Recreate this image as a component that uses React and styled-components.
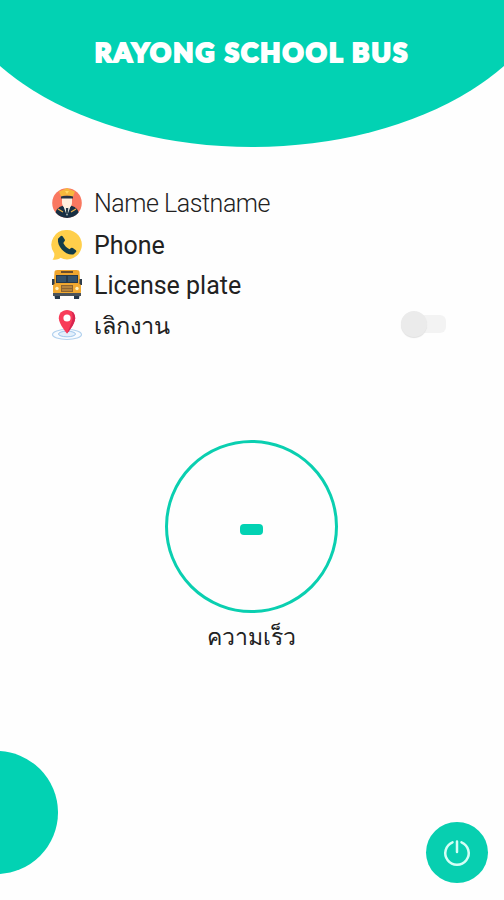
import React from "react";
import styled, { createGlobalStyle } from "styled-components";

const teal = "#02d2b3";

const Global = createGlobalStyle`
  * { box-sizing: border-box; }
  body { margin: 0; background: #fefefe; }
`;
const Screen = styled.main`
  position: relative;
  width: 504px;
  height: 900px;
  overflow: hidden;
  background: #fefefe;
  font-family: Roboto, "Noto Sans", sans-serif;
  color: #222;
`;
const Header = styled.header`
  width: 620px;
  height: 194px;
  margin: -47px 0 0 -58px;
  padding-top: 81px;
  background: ${teal};
  border-radius: 0 0 310px 310px / 0 0 194px 194px;
  text-align: center;
`;
const Title = styled.h1`
  margin: 0;
  color: #fff;
  font: 900 26px/36px Lato, sans-serif;
  letter-spacing: 2.1px;
  white-space: nowrap;
  -webkit-text-stroke: 2.2px #fff;
  stroke-linejoin: round;
`;
const Details = styled.ul`
  display: grid;
  grid-template-rows: 42px 42px 38px 42px;
  list-style: none;
  margin: 35px 57px 0 51px;
  padding: 0;
`;
const Row = styled.li`
  display: flex;
  align-items: center;
  gap: 11px;
`;
const Icon = styled.svg`
  width: 32px;
  height: 32px;
  flex: none;
`;
const Label = styled.span`
  padding-top: 2px;
  font-size: ${(p) => p.$size || 25}px;
  line-height: 32px;
  font-weight: ${(p) => p.$weight || 400};
  letter-spacing: ${(p) => p.$spacing || 0}px;
  white-space: nowrap;
`;
const Toggle = styled.button`
  display: flex;
  align-items: center;
  width: 42px;
  height: 18px;
  margin: 0 1px 2px auto;
  padding: 0;
  border: 0;
  border-radius: 6px;
  background: #f3f3f3;
`;
const Knob = styled.span`
  flex: none;
  width: 26px;
  height: 26px;
  margin-left: -3px;
  border-radius: 50%;
  background: #ebebeb;
  box-shadow: 0 1px 1px #e0e0e0;
`;
const Speed = styled.section`
  display: flex;
  flex-direction: column;
  align-items: center;
  margin-top: 94px;
  padding-right: 1px;
`;
const Dial = styled.div`
  display: grid;
  place-items: center;
  width: 173px;
  height: 173px;
  padding-top: 6px;
  border: 3px solid #0acfb0;
  border-radius: 50%;
`;
const Dash = styled.span`
  width: 23px;
  height: 11px;
  border-radius: 4px;
  background: ${teal};
`;
const Caption = styled.p`
  margin: 9px 0 0;
  font-size: 23px;
  line-height: 32px;
`;
const Bubble = styled.div`
  position: absolute;
  left: -65px;
  top: 751px;
  width: 123px;
  height: 123px;
  border-radius: 50%;
  background: ${teal};
`;
const Power = styled.button`
  position: absolute;
  left: 426px;
  top: 822px;
  display: grid;
  place-items: center;
  width: 62px;
  height: 61px;
  padding: 0;
  border: 0;
  border-radius: 50%;
  background: #07cfb0;
`;

const DriverIcon = () => (
  <Icon viewBox="0 0 32 32">
    <circle cx="16" cy="16" r="14.8" fill="#f97860" />
    <path d="M4.6 25.5c1-4 4-6 8-7h7c4 1 7 3 8 7a14.8 14.8 0 0 1-23 0z" fill="#172f43" />
    <path d="M12 18h8l-4 11z" fill="#f6f6ee" />
    <path d="M14.8 20h2.6l-.6 7h-1.6z" fill="#283e4a" />
    <path d="M11 9h10v6c0 4-2 6-5 6s-5-2-5-6z" fill="#fff0df" />
    <path d="M10 8.5h12v3H10z" fill="#263345" />
    <path d="M8 4.5l5-2 3-1.5 3 1.5 5 2-2 5q-6-2-12 0z" fill="#f6b83d" />
    <path d="M14 4h4l-2 3z" fill="#ffda65" />
    <path d="M7 22l5 3m8 0 5-3" stroke="#edb34a" strokeWidth="1.3" />
  </Icon>
);
const PhoneIcon = () => (
  <Icon viewBox="0 0 32 32">
    <path d="M16 1a14.7 14.7 0 1 1-6.5 27.8C7 30.8 4 31 1.5 30.4c1.5-1.6 2-3.5 1.8-6A14.7 14.7 0 0 1 16 1z" fill="#ffcf4b" />
    <path d="M7 9.7 9.8 7q1-.8 1.8.3l2.2 3.2q.5 1-.3 1.8L12.3 14c1.5 3 3.3 4.8 6.2 6.2l1.5-1.2q.9-.7 1.8 0l3.1 2.2q1 .9.1 1.8l-2.2 2.3C15.2 27 5.8 18 7 9.7z" fill="#123c49" />
  </Icon>
);
const BusIcon = () => (
  <Icon viewBox="0 0 32 32">
    <path d="M3 23h6v7H4zm20 0h6l-1 7h-5z" fill="#26384a" />
    <path d="M3.5 3q0-2 3-2h19q3 0 3 2l1 14h-27z" fill="#efa52e" />
    <path d="M10 2h12v2H10z" fill="#6b4d2b" />
    <path d="M5 6h22v8H5z" fill="#26394b" />
    <path d="M6 7h9v6H6zm11 0h9v6h-9z" fill="#34516a" />
    <path d="M1 10h2.5v6H1zm27.5 0H31v6h-2.5z" fill="#303d4a" />
    <rect x="2" y="15" width="28" height="10" rx="2" fill="#f2aa31" />
    <path d="M10 16h12v7H10z" fill="#8c6432" />
    <path d="M11 18h10m-10 3h10" stroke="#e0a344" />
    <circle cx="6" cy="19.5" r="1.7" fill="#fff0bd" />
    <circle cx="26" cy="19.5" r="1.7" fill="#fff0bd" />
    <path d="M2 24h28v3H2z" fill="#4b535a" />
  </Icon>
);
const PinIcon = () => (
  <Icon viewBox="0 0 32 32">
    <ellipse cx="16" cy="25.5" rx="14.5" ry="5" fill="#f7fbff" stroke="#b3d2ee" strokeWidth="1.2" />
    <ellipse cx="16" cy="25" rx="8.5" ry="2.8" fill="#e1effc" stroke="#9fc6eb" />
    <path d="M16 1c5 0 8.2 3.6 8.2 8.2C24.2 15 16 24.5 16 24.5S7.8 15 7.8 9.2C7.8 4.6 11 1 16 1z" fill="#f83c59" />
    <path d="M20 2c3 1.5 4.2 4 4.2 7.2C24.2 15 16 24.5 16 24.5 20 15 24 8 20 2z" fill="#d72550" />
    <circle cx="16" cy="9" r="3.6" fill="#fff" />
  </Icon>
);

export default function App() {
  return (
    <Screen>
      <Global />
      <Header><Title>RAYONG SCHOOL BUS</Title></Header>
      <Details>
        <Row><DriverIcon /><Label $weight={300} $spacing={-0.45}>Name Lastname</Label></Row>
        <Row><PhoneIcon /><Label>Phone</Label></Row>
        <Row><BusIcon /><Label>License plate</Label></Row>
        <Row>
          <PinIcon /><Label $size={23.5}>เลิกงาน</Label>
          <Toggle aria-label="เลิกงาน"><Knob /></Toggle>
        </Row>
      </Details>
      <Speed>
        <Dial><Dash /></Dial>
        <Caption>ความเร็ว</Caption>
      </Speed>
      <Bubble />
      <Power aria-label="Power">
        <svg width="30" height="30" viewBox="0 0 30 30" fill="none" stroke="#d4fff6" strokeWidth="2.5" strokeLinecap="round">
          <path d="M10.5 4.3a11.7 11.7 0 1 0 9 0M15 3.5v10.5" />
        </svg>
      </Power>
    </Screen>
  );
}
